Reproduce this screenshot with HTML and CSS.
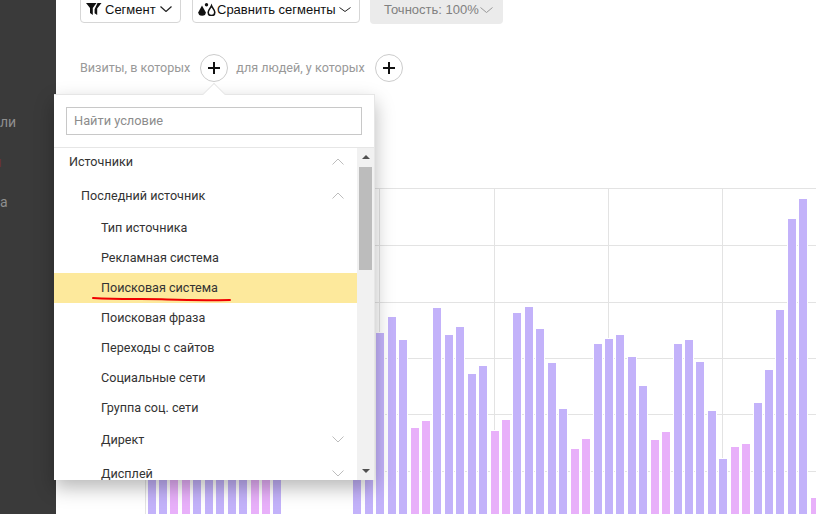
FILE: index.html
```html
<!DOCTYPE html>
<html lang="en">
<head>
    <meta charset="UTF-8">
    <meta name="viewport" content="width=device-width, initial-scale=1.0">
    <title>Сегменты</title>
    <link rel="stylesheet" href="styles.css">
</head>
<body>
    <div class="sidebar">
        <div class="side-item">ли</div>
        <div class="side-item side-red">я</div>
        <div class="side-item">а</div>
    </div>
    <div class="main">
        <div class="toolbar">
            <button class="tool-btn btn-segment">
                <svg class="tool-icon" width="16" height="12" viewBox="0 0 16 12"><path d="M0 0H10.5L6.8 5V12L4 10V5Z M11.5 0H15.5L11.2 5.4V12L8.6 10.2V6.2Z" fill="#111"/></svg>
                <span>Сегмент</span>
                <svg class="caret" width="12" height="6" viewBox="0 0 12 6"><path d="M.5.5L6 5.5 11.500.5" fill="none" stroke="#222" stroke-width="1.2"/></svg>
            </button>
            <button class="tool-btn btn-compare">
                <svg class="tool-icon" width="18" height="13" viewBox="0 0 18 13"><path d="M4 2.500L7.800 9.300A3.700 3.500 0 0 1 .3 9.300Z" fill="#111"/><circle cx="8.500" cy="1.800" r="1.700" fill="#111"/><path d="M13.500 2.800C14.300 5 16.800 7 16.800 9.300A3.300 3.300 0 0 1 10.200 9.300C10.200 7 12.700 5 13.500 2.800Z" fill="#fff" stroke="#111" stroke-width="1.600"/></svg>
                <span>Сравнить сегменты</span>
                <svg class="caret" width="12" height="5" viewBox="0 0 12 5"><path d="M.5.5L6 4.500 11.500.5" fill="none" stroke="#222" stroke-width="1"/></svg>
            </button>
            <button class="tool-btn btn-accuracy">
                <span>Точность: 100%</span>
                <svg class="caret" width="13" height="6" viewBox="0 0 13 6"><path d="M.5.500L6.500 5.500 12.500.5" fill="none" stroke="#999" stroke-width="1"/></svg>
            </button>
        </div>

        <div class="segments">
            <span class="seg-label">Визиты, в которых</span>
            <div class="plus"></div>
            <span class="seg-label">для людей, у которых</span>
            <div class="plus"></div>
        </div>

        <svg class="chart" width="760" height="326" viewBox="56 188 760 326">
            <g class="grid">
                <line x1="145" y1="188.500" x2="816" y2="188.500"/>
                <line x1="145" y1="245.500" x2="816" y2="245.500"/>
                <line x1="145" y1="302.500" x2="816" y2="302.500"/>
                <line x1="145" y1="358.500" x2="816" y2="358.500"/>
                <line x1="145" y1="414.500" x2="816" y2="414.500"/>
                <line x1="145" y1="471.500" x2="816" y2="471.500"/>
                <line x1="145.500" y1="188" x2="145.500" y2="514"/>
                <line x1="379.500" y1="188" x2="379.500" y2="514"/>
                <line x1="494.500" y1="188" x2="494.500" y2="514"/>
                <line x1="608.500" y1="188" x2="608.500" y2="514"/>
                <line x1="722.500" y1="188" x2="722.500" y2="514"/>
            </g>
            <g class="bars">
                <rect x="148" y="440" width="8" height="74"/>
                <rect x="159" y="440" width="8" height="74"/>
                <rect class="pink" x="170" y="440" width="8" height="74"/>
                <rect class="pink" x="182" y="440" width="8" height="74"/>
                <rect x="193" y="440" width="8" height="74"/>
                <rect x="205" y="440" width="8" height="74"/>
                <rect x="216" y="440" width="8" height="74"/>
                <rect x="228" y="440" width="8" height="74"/>
                <rect x="239" y="440" width="8" height="74"/>
                <rect class="pink" x="251" y="440" width="8" height="74"/>
                <rect class="pink" x="262" y="440" width="8" height="74"/>
                <rect x="273" y="440" width="8" height="74"/>
                <rect x="353" y="400" width="8" height="114"/>
                <rect x="365" y="400" width="8" height="114"/>
                <rect x="376" y="333" width="8" height="181"/>
                <rect x="388" y="317" width="8" height="197"/>
                <rect x="399" y="340" width="8" height="174"/>
                <rect class="pink" x="411" y="428" width="8" height="86"/>
                <rect class="pink" x="422" y="421" width="8" height="93"/>
                <rect x="433" y="308" width="8" height="206"/>
                <rect x="445" y="335" width="8" height="179"/>
                <rect x="456" y="327" width="8" height="187"/>
                <rect x="468" y="374" width="8" height="140"/>
                <rect x="479" y="366" width="8" height="148"/>
                <rect class="pink" x="491" y="431" width="8" height="83"/>
                <rect class="pink" x="502" y="420" width="8" height="94"/>
                <rect x="513" y="313" width="8" height="201"/>
                <rect x="525" y="307" width="8" height="207"/>
                <rect x="536" y="329" width="8" height="185"/>
                <rect x="548" y="363" width="8" height="151"/>
                <rect x="559" y="409" width="8" height="105"/>
                <rect class="pink" x="571" y="449" width="8" height="65"/>
                <rect class="pink" x="582" y="439" width="8" height="75"/>
                <rect x="594" y="344" width="8" height="170"/>
                <rect x="605" y="339" width="8" height="175"/>
                <rect x="616" y="335" width="8" height="179"/>
                <rect x="628" y="357" width="8" height="157"/>
                <rect x="639" y="386" width="8" height="128"/>
                <rect class="pink" x="651" y="440" width="8" height="74"/>
                <rect class="pink" x="662" y="432" width="8" height="82"/>
                <rect x="674" y="344" width="8" height="170"/>
                <rect x="685" y="340" width="8" height="174"/>
                <rect x="696" y="362" width="8" height="152"/>
                <rect x="708" y="411" width="8" height="103"/>
                <rect x="719" y="459" width="8" height="55"/>
                <rect class="pink" x="731" y="447" width="8" height="67"/>
                <rect class="pink" x="742" y="444" width="8" height="70"/>
                <rect x="754" y="403" width="8" height="111"/>
                <rect x="765" y="370" width="8" height="144"/>
                <rect x="776" y="310" width="8" height="204"/>
                <rect x="788" y="219" width="8" height="295"/>
                <rect x="799" y="199" width="8" height="315"/>
                <rect class="pink" x="811" y="498" width="8" height="16"/>
            </g>
        </svg>

        <div class="popup">
            <div class="popup-notch"></div>
            <div class="popup-search">
                <input class="search-input" type="text" placeholder="Найти условие">
            </div>
            <div class="popup-body">
                <div class="cond-list">
                    <div class="cond cond-top">Источники
                        <svg class="chev" width="12" height="7" viewBox="0 0 12 7"><path d="M.5 6.500L6 1 11.500 6.500"/></svg>
                    </div>
                    <div class="cond cond-head">Последний источник
                        <svg class="chev" width="12" height="7" viewBox="0 0 12 7"><path d="M.5 6.500L6 1 11.500 6.500"/></svg>
                    </div>
                    <div class="cond cond-leaf">Тип источника</div>
                    <div class="cond cond-leaf">Рекламная система</div>
                    <div class="cond cond-leaf cond-selected">Поисковая система</div>
                    <div class="cond cond-leaf">Поисковая фраза</div>
                    <div class="cond cond-leaf">Переходы с сайтов</div>
                    <div class="cond cond-leaf">Социальные сети</div>
                    <div class="cond cond-leaf">Группа соц. сети</div>
                    <div class="cond cond-leaf cond-folder">Директ
                        <svg class="chev" width="12" height="7" viewBox="0 0 12 7"><path d="M.5.500L6 6 11.500.5"/></svg>
                    </div>
                    <div class="cond cond-leaf cond-folder">Дисплей
                        <svg class="chev" width="12" height="7" viewBox="0 0 12 7"><path d="M.5.500L6 6 11.500.5"/></svg>
                    </div>
                </div>
                <div class="scrollbar">
                    <div class="scroll-arrow scroll-up"></div>
                    <div class="scroll-thumb"></div>
                    <div class="scroll-arrow scroll-down"></div>
                </div>
            </div>
            <svg class="scribble" width="140" height="6" viewBox="0 0 140 6"><path d="M1 2C30 4 50 2.500 75 3.500S120 4.500 138 4" fill="none" stroke="#f00000" stroke-width="2" stroke-linecap="round"/></svg>
        </div>
    </div>
</body>
</html>
```

FILE: styles.css
```css
html, body {
    margin: 0;
    height: 100%;
}

body {
    display: flex;
    height: 514px;
    overflow: hidden;
    background: #fff;
    font-family: "Liberation Sans", Arial, sans-serif;
}

.sidebar {
    width: 56px;
    flex: none;
    padding-top: 112px;
    box-sizing: border-box;
    background: #3a3a3a;
    overflow: hidden;
    color: #8f8f8f;
    font-family: Roboto, sans-serif;
    font-size: 14px;
}

.side-item {
    height: 40px;
    line-height: 20px;
}

.side-red {
    margin-left: -6px;
    color: #6a3030;
}

.main {
    position: relative;
    flex: 1;
    min-width: 0;
    padding-left: 24px;
}

.toolbar {
    display: flex;
    align-items: flex-start;
    margin-top: -5px;
    height: 28px;
}

.tool-btn {
    display: flex;
    align-items: center;
    height: 28px;
    padding: 0;
    box-sizing: border-box;
    border: 1px solid #d6d6d6;
    border-radius: 4px;
    background: #fff;
    color: #111;
    font-family: "Liberation Sans", Arial, sans-serif;
    font-size: 13px;
}

.btn-segment {
    width: 101px;
    padding-left: 5px;
}

.btn-segment .caret {
    margin-left: 4px;
}

.btn-segment .tool-icon {
    margin-right: 3px;
}

.btn-compare {
    width: 168px;
    margin-left: 11px;
    padding-left: 5px;
}

.btn-compare .tool-icon {
    margin-right: 1px;
}

.btn-compare .caret {
    margin-left: 3px;
}

.btn-accuracy {
    width: 133px;
    height: 29px;
    margin-left: 10px;
    padding-left: 14px;
    border: none;
    background: #ebebeb;
    color: #808080;
    font-size: 13px;
}

.btn-accuracy .caret {
    margin-left: 1px;
}

.segments {
    display: flex;
    align-items: center;
    height: 28px;
    margin-top: 31px;
}

.seg-label {
    color: #999;
    font-family: Roboto, sans-serif;
    font-size: 12.6px;
    margin-top: -2px;
}

.seg-label + .plus {
    margin-left: 10px;
}

.plus + .seg-label {
    margin-left: 8px;
}

.plus {
    position: relative;
    width: 28px;
    height: 28px;
    box-sizing: border-box;
    border: 1px solid #ccc;
    border-radius: 50%;
    background: #fff;
}

.plus::before, .plus::after {
    content: "";
    position: absolute;
    background: #111;
}

.plus::before {
    left: 7px;
    top: 12px;
    width: 12px;
    height: 2px;
}

.plus::after {
    left: 12px;
    top: 7px;
    width: 2px;
    height: 12px;
}

.chart {
    display: block;
    margin: 106px 0 0 -24px;
}

.grid line {
    stroke: #e3e3e3;
    stroke-width: 1;
}

.bars rect {
    fill: #c3b2fa;
    stroke: #fff;
    stroke-width: 2;
    paint-order: stroke;
}

.bars rect.pink {
    fill: #e8b0fa;
}

.popup {
    position: absolute;
    left: -2px;
    top: 94px;
    width: 321px;
    height: 386px;
    box-sizing: border-box;
    border-top: 1px solid #e6e6e6;
    border-right: 1px solid #e6e6e6;
    background: #fff;
    box-shadow: 0 8px 18px rgba(0, 0, 0, 0.28);
    color: #333;
    font-family: Roboto, sans-serif;
    font-size: 12.6px;
}

.popup-notch {
    position: absolute;
    left: 152px;
    top: -9px;
    width: 16px;
    height: 16px;
    box-sizing: border-box;
    border-top: 1px solid #e6e6e6;
    border-left: 1px solid #e6e6e6;
    background: #fff;
    transform: rotate(45deg);
}

.popup-search {
    position: relative;
    height: 53px;
    box-sizing: border-box;
    padding: 12px 12px 0;
    border-bottom: 1px solid #e6e6e6;
}

.search-input {
    display: block;
    width: 296px;
    height: 28px;
    box-sizing: border-box;
    padding: 0 7px 2px;
    border: 1px solid #c8c8c8;
    border-radius: 0;
    outline: none;
    font-family: Roboto, sans-serif;
    font-size: 12.8px;
}

.search-input::placeholder {
    color: #8c8c8c;
}

.popup-body {
    display: flex;
    height: 332px;
    overflow: hidden;
}

.cond-list {
    flex: 1;
    overflow: hidden;
}

.cond {
    display: flex;
    align-items: center;
    justify-content: space-between;
    box-sizing: border-box;
    padding-right: 13px;
}

.cond-top {
    height: 31px;
    padding-left: 15px;
    padding-bottom: 5px;
}

.cond-head {
    height: 34px;
    padding-left: 27px;
    padding-bottom: 2px;
}

.cond-leaf {
    height: 30px;
    padding-left: 47px;
    padding-bottom: 2px;
}

.cond-folder {
    height: 34px;
}

.cond-selected {
    background: #fde99c;
}

.chev {
    fill: none;
    stroke: #bdbdbd;
    stroke-width: 1;
}

.scrollbar {
    display: flex;
    flex-direction: column;
    align-items: center;
    width: 17px;
    background: #f1f1f1;
}

.scroll-arrow {
    width: 0;
    height: 0;
    border-left: 4px solid transparent;
    border-right: 4px solid transparent;
}

.scroll-up {
    margin-top: 7px;
    border-bottom: 4px solid #505050;
}

.scroll-thumb {
    width: 13px;
    height: 103px;
    margin-top: 8px;
    background: #bcbcbc;
}

.scroll-down {
    margin-top: 199px;
    border-top: 4px solid #505050;
}

.scribble {
    position: absolute;
    left: 38px;
    top: 201px;
}
```
